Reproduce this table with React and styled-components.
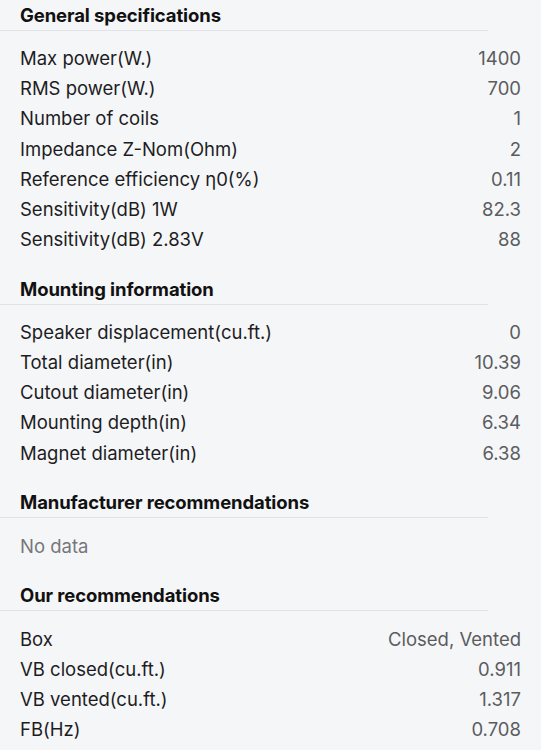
import React from 'react';
import styled, { createGlobalStyle } from 'styled-components';

const GlobalStyle = createGlobalStyle`
  html, body {
    margin: 0;
    padding: 0;
    background: #f5f6f8;
  }
  body {
    font-family: Inter, "Liberation Sans", sans-serif;
    -webkit-font-smoothing: antialiased;
  }
`;

const Page = styled.div`
  width: 541px;
  height: 750px;
  overflow: hidden;
  background: #f5f6f8;
  display: flex;
  flex-direction: column;
  gap: 19.8px;
`;

const Section = styled.section`
  display: flex;
  flex-direction: column;
`;

const Heading = styled.div`
  height: 30px;
  padding: 0 20px;
  box-sizing: border-box;
  display: flex;
  align-items: center;
  font-size: 18.5px;
  font-weight: 700;
  color: #111;
  letter-spacing: -0.1px;
`;

const Divider = styled.div`
  width: 488px;
  height: 1px;
  background: #e2e3e6;
`;

const Rows = styled.div`
  display: flex;
  flex-direction: column;
  padding-top: 12px;
`;

const Row = styled.div`
  height: 30.17px;
  padding: 0 20px;
  display: flex;
  align-items: center;
  justify-content: space-between;
  font-size: 18.5px;
`;

const Label = styled.span`
  color: ${(p) => (p.muted ? '#76777b' : '#1d1d1f')};
`;

const Value = styled.span`
  color: #5b5c60;
`;

const sections = [
  {
    title: 'General specifications',
    rows: [
      ['Max power(W.)', '1400'],
      ['RMS power(W.)', '700'],
      ['Number of coils', '1'],
      ['Impedance Z-Nom(Ohm)', '2'],
      ['Reference efficiency η0(%)', '0.11'],
      ['Sensitivity(dB) 1W', '82.3'],
      ['Sensitivity(dB) 2.83V', '88'],
    ],
  },
  {
    title: 'Mounting information',
    rows: [
      ['Speaker displacement(cu.ft.)', '0'],
      ['Total diameter(in)', '10.39'],
      ['Cutout diameter(in)', '9.06'],
      ['Mounting depth(in)', '6.34'],
      ['Magnet diameter(in)', '6.38'],
    ],
  },
  {
    title: 'Manufacturer recommendations',
    rows: [],
  },
  {
    title: 'Our recommendations',
    rows: [
      ['Box', 'Closed, Vented'],
      ['VB closed(cu.ft.)', '0.911'],
      ['VB vented(cu.ft.)', '1.317'],
      ['FB(Hz)', '0.708'],
    ],
  },
];

export default function App() {
  return (
    <Page>
      <GlobalStyle />
      {sections.map((s) => (
        <Section key={s.title}>
          <Heading>{s.title}</Heading>
          <Divider />
          <Rows>
            {s.rows.length === 0 ? (
              <Row>
                <Label muted>No data</Label>
              </Row>
            ) : (
              s.rows.map(([label, value]) => (
                <Row key={label}>
                  <Label>{label}</Label>
                  <Value>{value}</Value>
                </Row>
              ))
            )}
          </Rows>
        </Section>
      ))}
    </Page>
  );
}
